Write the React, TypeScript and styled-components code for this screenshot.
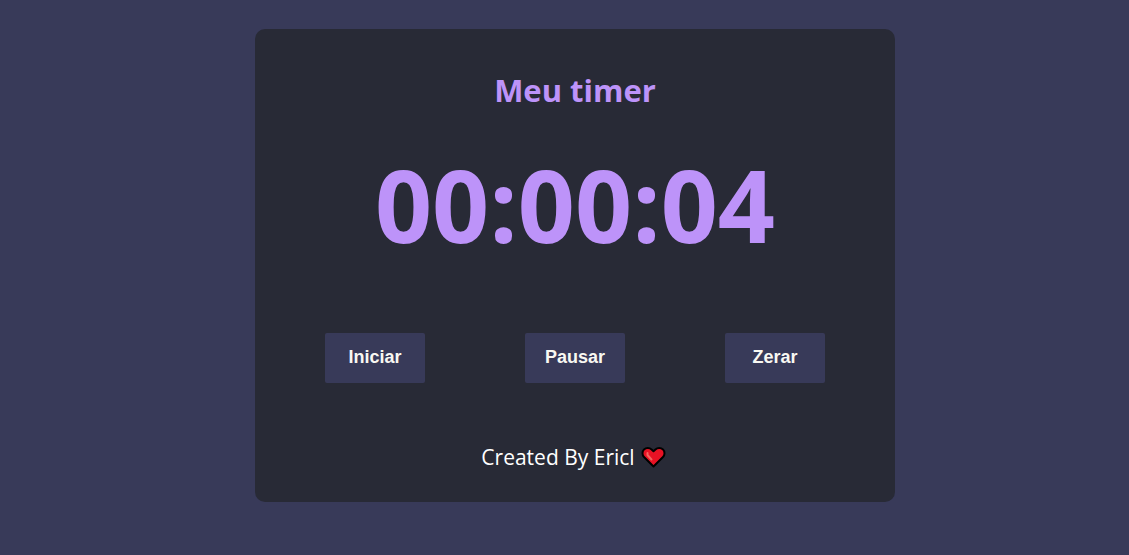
import React, { useEffect, useState } from "react";
import styled, { createGlobalStyle } from "styled-components";

const GlobalStyle = createGlobalStyle`
  * { box-sizing: border-box; }
  body {
    margin: 0;
    background: #383a59;
    color: #ffffff;
    font-family: "Open Sans", "Noto Sans", sans-serif;
  }
`;

const Page = styled.main`
  display: flex;
  justify-content: center;
  padding: 29px 0 29px 21px;
`;

const Card = styled.section`
  display: flex;
  flex-direction: column;
  align-items: center;
  width: 100%;
  max-width: 640px;
  padding: 39px 20px 29px;
  border-radius: 10px;
  background: #282a36;
`;

const Title = styled.h1`
  margin: 0 0 24px;
  color: #bd93f9;
  font-size: 31px;
  line-height: 44px;
`;

const Clock = styled.time`
  margin-bottom: 61px;
  color: #bd93f9;
  font-size: 100px;
  font-weight: 700;
  line-height: 136px;
`;

const Controls = styled.div`
  display: flex;
  justify-content: space-around;
  width: 100%;
  margin-bottom: 58px;
`;

const ControlButton = styled.button`
  width: 100px;
  height: 50px;
  padding: 0 0 2px;
  border: 0;
  border-radius: 2px;
  background: #383a59;
  color: #f8f8f2;
  font: 700 18px "Liberation Sans", Arial, sans-serif;
  cursor: pointer;
`;

const Footer = styled.footer`
  display: flex;
  align-items: center;
  gap: 6px;
  font-size: 21px;
  line-height: 32px;
`;

const HeartIcon = styled.svg`
  width: 28px;
  height: 24px;
`;

const pad = (value: number) => String(value).padStart(2, "0");

const formatTime = (total: number) =>
  [Math.floor(total / 3600), Math.floor(total / 60) % 60, total % 60].map(pad).join(":");

export default function App() {
  const [seconds, setSeconds] = useState(4);
  const [running, setRunning] = useState(false);

  useEffect(() => {
    if (!running) return;
    const id = setInterval(() => setSeconds((s) => s + 1), 1000);
    return () => clearInterval(id);
  }, [running]);

  const reset = () => {
    setRunning(false);
    setSeconds(0);
  };

  return (
    <>
      <GlobalStyle />
      <Page>
        <Card>
          <Title>Meu timer</Title>
          <Clock>{formatTime(seconds)}</Clock>
          <Controls>
            <ControlButton type="button" onClick={() => setRunning(true)}>Iniciar</ControlButton>
            <ControlButton type="button" onClick={() => setRunning(false)}>Pausar</ControlButton>
            <ControlButton type="button" onClick={reset}>Zerar</ControlButton>
          </Controls>
          <Footer>
            <span>Created By Ericl</span>
            <HeartIcon viewBox="0 1 28 24" aria-hidden="true">
              <path
                d="M12.500 22.500 3 13C1 11 1 7.400 3 5.400 5 3.500 8.500 3.500 10.600 5.400L12.500 7.200l1.900-1.800C16.500 3.500 20 3.500 22 5.400c2 2 2 5.600 0 7.600Z"
                fill="#e81224"
                stroke="#000000"
                strokeWidth="2"
                strokeLinejoin="round"
              />
              <path d="M6.500 9v2l4 4.500" fill="none" stroke="#f4645f" strokeWidth="2" strokeLinecap="round" strokeLinejoin="round" />
            </HeartIcon>
          </Footer>
        </Card>
      </Page>
    </>
  );
}
